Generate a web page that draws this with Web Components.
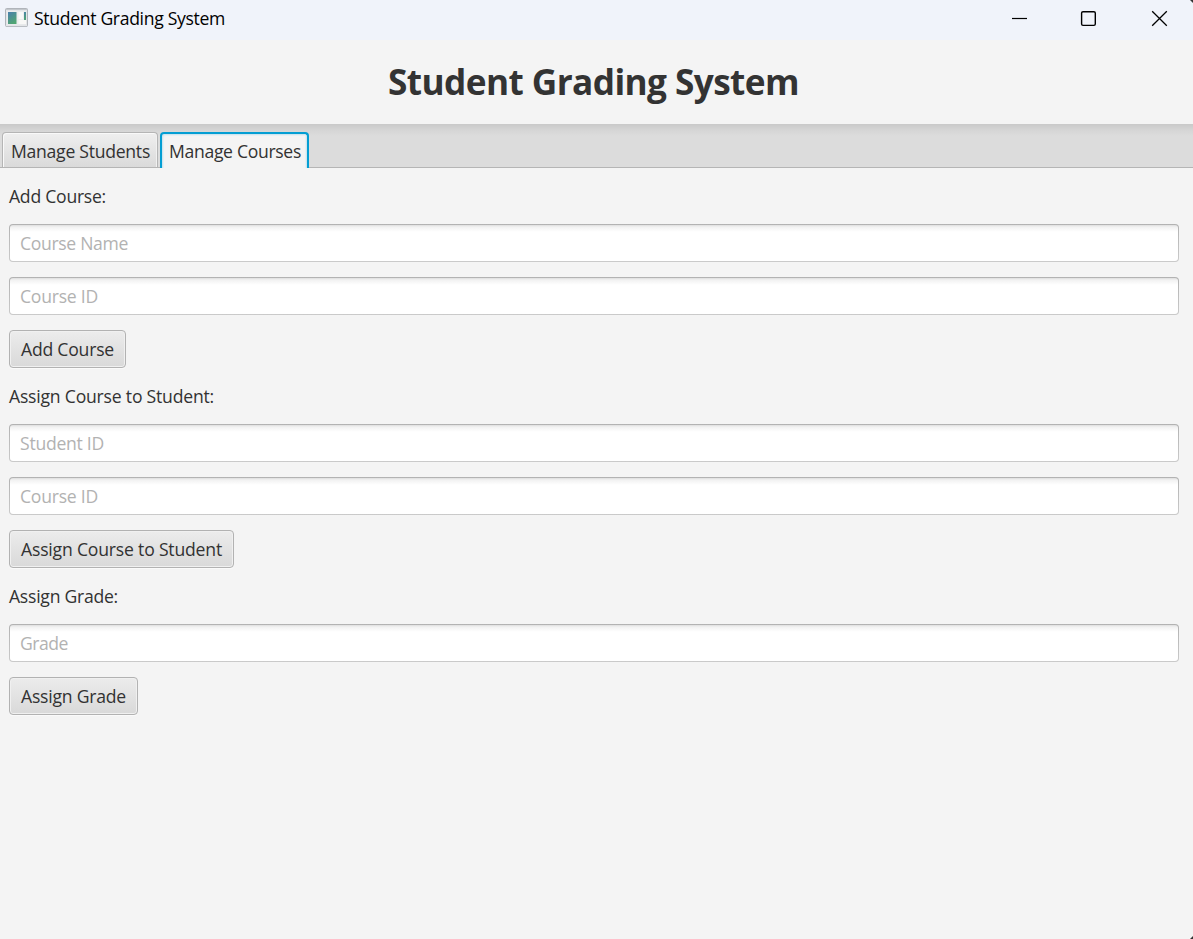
<!DOCTYPE html>
<html lang="en">
<head>
<meta charset="utf-8">
<title>Student Grading System</title>
<style>
html,body{margin:0;height:100%;overflow:hidden;background:#f4f4f4}
body{font-family:"Open Sans","Noto Sans",sans-serif;font-size:17.6px;line-height:26px;color:#323232}
</style>
</head>
<body>
<app-window>
  <title-bar slot="title"><text-run width="191">Student Grading System</text-run></title-bar>
  <page-heading slot="heading"><text-run width="411">Student Grading System</text-run></page-heading>
  <tab-bar slot="tabs">
    <tab-item><text-run width="139">Manage Students</text-run></tab-item>
    <tab-item selected><text-run width="132">Manage Courses</text-run></tab-item>
  </tab-bar>
  <form-panel>
    <form-label><text-run width="97">Add Course:</text-run></form-label>
    <text-input><text-run width="108">Course Name</text-run></text-input>
    <text-input><text-run width="78">Course ID</text-run></text-input>
    <push-button><text-run width="93">Add Course</text-run></push-button>
    <form-label><text-run width="205">Assign Course to Student:</text-run></form-label>
    <text-input><text-run width="84">Student ID</text-run></text-input>
    <text-input><text-run width="78">Course ID</text-run></text-input>
    <push-button><text-run width="201">Assign Course to Student</text-run></push-button>
    <form-label><text-run width="109">Assign Grade:</text-run></form-label>
    <text-input><text-run width="48">Grade</text-run></text-input>
    <push-button><text-run width="105">Assign Grade</text-run></push-button>
  </form-panel>
</app-window>
<script>
function define(name, html, setup) {
  customElements.define(name, class extends HTMLElement {
    constructor() {
      super();
      this.attachShadow({mode: 'open'}).innerHTML = html;
    }
    connectedCallback() { if (setup) setup(this); }
  });
}

define('app-window', `<style>
:host{display:flex;flex-direction:column;height:100vh;position:relative;background:#f4f4f4;overflow:hidden}
.corner{position:absolute;right:0;width:3px;height:3px;background:#333}
.top{top:0;clip-path:polygon(0 0,100% 0,100% 100%)}
.bottom{bottom:0;clip-path:polygon(100% 0,100% 100%,0 100%)}
</style><slot name="title"></slot><slot name="heading"></slot><slot name="tabs"></slot><slot></slot>
<i class="corner top"></i><i class="corner bottom"></i>`);

define('title-bar', `<style>
:host{display:flex;height:40px;flex:none;background:#f0f3fa;color:#000;padding-left:5px;box-sizing:border-box}
.icon{width:23px;height:20px;margin:8px 6px 0 0;flex:none}
.name{flex:1;line-height:36px}
.name ::slotted(*){line-height:36px}
.controls{display:flex;flex:none;width:210px}
.controls svg{width:70px;height:38px;display:block}
</style>
<svg class="icon" viewBox="0 0 23 20">
<defs><linearGradient id="g" x1="0" y1="0" x2=".5" y2="1"><stop stop-color="#4a7fae"/><stop offset="1" stop-color="#50a573"/></linearGradient></defs>
<rect x=".5" y=".5" width="22" height="18" rx="1" fill="#e3e5e8" stroke="#b0b4ba"/>
<path d="M1 1.5h21" stroke="#c3c7cc"/>
<rect x="2" y="3" width="19" height="13.5" fill="#eceded"/>
<rect x="3" y="4" width="8.5" height="12" fill="url(#g)"/>
<path d="M13.5 4h4.5v7h-4.5zM13.5 12h7.5v4h-7.5z" fill="#f8f8f7"/>
<rect x="19" y="4" width="2" height="8" fill="url(#g)"/>
<path d="M1 18.5h21" stroke="#b9bdc3"/>
</svg>
<span class="name"><slot></slot></span>
<span class="controls">
<svg viewBox="0 0 70 38"><path d="M29 18.5h15" stroke="#000" stroke-width="1.2"/></svg>
<svg viewBox="0 0 70 38"><rect x="28.6" y="11.7" width="13.7" height="13.7" rx="1.4" fill="none" stroke="#000" stroke-width="1.4"/></svg>
<svg viewBox="0 0 70 38"><path d="M29.2 11.2l14.6 14.6M43.8 11.2l-14.6 14.6" stroke="#000" stroke-width="1.3"/></svg>
</span>`);

define('page-heading', `<style>
:host{display:flex;justify-content:center;height:84px;flex:none;font-size:35.2px;font-weight:700;line-height:82px;color:#333;padding-right:6px}
</style><slot></slot>`);

define('tab-bar', `<style>
:host{display:flex;align-items:flex-start;gap:1px;height:44px;flex:none;box-sizing:border-box;padding:8px 2px 0;
background:linear-gradient(#b5b5b5,#b5b5b5) 0 100%/100% 1px no-repeat,linear-gradient(#c9c9c9,#d5d5d5 6px,#dcdcdc 12px)}
</style><slot></slot>`);

define('tab-item', `<style>
:host{display:block;box-sizing:border-box;height:35px;padding:5px 7px 0 8px;line-height:27px;border:1px solid #b5b5b5;border-bottom:0;border-radius:4px 4px 0 0;
background:linear-gradient(#efefef,#dadada);box-shadow:inset 1px 1px #f9f9f9,inset -1px 0 #f1f1f1}
:host([selected]){height:36px;border:2px solid #039ed3;border-bottom:0;padding:4px 6px 0 7px;margin-left:1px;background:#f4f4f4;box-shadow:inset 1px 1px #cfe5ee,inset -1px 0 #cfe5ee,inset 2px 2px #e6f0f4,inset -2px 0 #e6f0f4}
</style><slot></slot>`);

define('form-panel', `<style>
:host{display:flex;flex:1;flex-direction:column;align-items:flex-start;gap:15px;padding:15px 14px 15px 9px}
</style><slot></slot>`);

define('form-label', `<style>:host{display:block;height:26px;line-height:26px}</style><slot></slot>`);

define('text-input', `<style>
:host{display:block;align-self:stretch;box-sizing:border-box;height:38px;padding:0 10px;line-height:36px;color:#b2b2b2;border:1px solid transparent;border-radius:4px;
background:linear-gradient(#dedede,#f2f2f2 2px,#fff 7px) padding-box,linear-gradient(#b2b2b2,#cacaca) border-box}
</style><slot></slot>`);

define('push-button', `<style>
:host{display:block;box-sizing:border-box;height:38px;padding:0 11px;line-height:36px;border:1px solid #b2b2b2;border-radius:4px;
background:linear-gradient(#ececec,#d9d9d9);box-shadow:inset 0 0 0 1px #f0f0f0,0 1px #fafafa}
</style><slot></slot>`);

/* A single line of text tracked to an exact advance width. */
define('text-run', `<style>
:host{display:inline-block;white-space:nowrap;vertical-align:top}
span{display:inline-block}
</style><span><slot></slot></span>`, el => {
  const target = +el.getAttribute('width');
  const span = el.shadowRoot.querySelector('span');
  const natural = span.getBoundingClientRect().width;
  span.style.letterSpacing = (target - natural) / el.textContent.length + 'px';
  el.style.width = target + 'px';
});
</script>
</body>
</html>
